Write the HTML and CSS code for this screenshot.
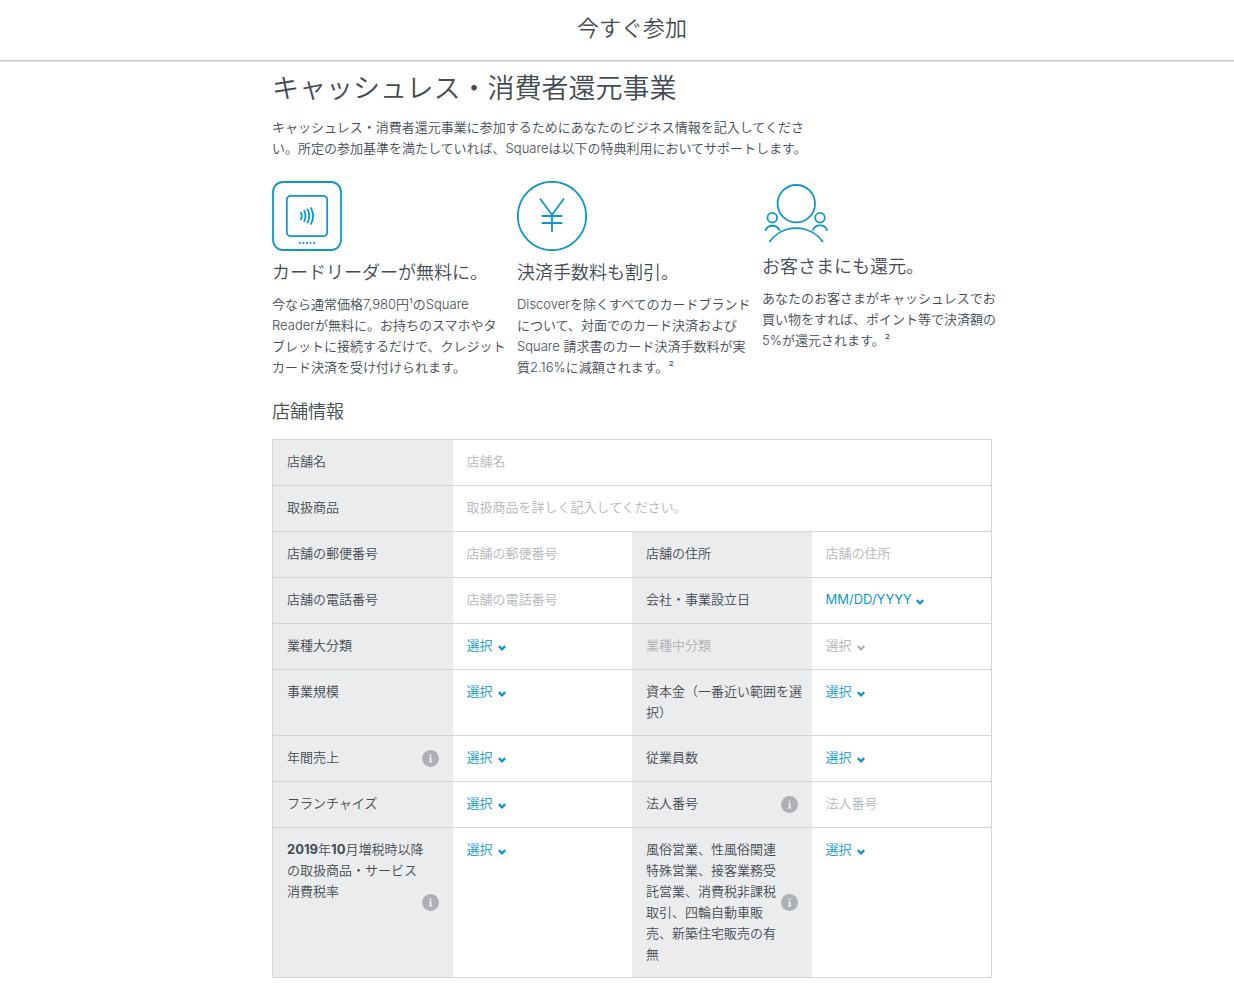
FILE: index.html
```html
<!DOCTYPE html>
<html lang="ja">
<head>
<meta charset="utf-8">
<meta name="viewport" content="width=device-width, initial-scale=1">
<title>今すぐ参加</title>
<link rel="stylesheet" href="styles.css">
</head>
<body>
<svg class="sprite" aria-hidden="true">
  <symbol id="chevron" viewBox="0 0 8 6"><path d="M.7 1.200 4 4.300 7.300 1.200" fill="none" stroke="currentColor" stroke-width="2.300"/></symbol>
  <symbol id="info" viewBox="0 0 17 17"><circle cx="8.500" cy="8.500" r="8.500" fill="#adb1b6"/><path d="M7.700 4.500h1.800v1.600H7.700zM7 7.200h2.500v4.300h.8v1H6.900v-1h.9V8.200H7z" fill="#eef0f1"/></symbol>
</svg>
<header class="topbar"><div class="topbar-title">今すぐ参加</div></header>
<main class="page">
  <h1 class="page-title">キャッシュレス・消費者還元事業</h1>
  <p class="text">キャッシュレス・消費者還元事業に参加するためにあなたのビジネス情報を記入してくださ<br>い。所定の参加基準を満たしていれば、Squareは以下の特典利用においてサポートします。</p>

  <section class="features">
    <article class="feature">
      <svg class="feature-icon" width="70" height="70" viewBox="0 0 70 70">
        <rect x="1" y="1" width="68" height="68" rx="10"/>
        <rect x="14.800" y="14.800" width="40.400" height="40.400" rx="4"/>
        <path d="M28.800 31q1.800 4 0 8M32 29.200q3 5.800 0 11.600M35.300 27.800q4 7.200 0 14.400M38.600 26.400q5 8.600 0 17.200"/>
        <path d="M27 62h1.600M30.600 62h1.600M34.200 62h1.600M37.800 62h1.600M41.400 62h1.600"/>
      </svg>
      <h3 class="subtitle">カードリーダーが無料に。</h3>
      <p class="text">今なら通常価格7,980円¹のSquare<br>Readerが無料に。お持ちのスマホやタ<br>ブレットに接続するだけで、クレジット<br>カード決済を受け付けられます。</p>
    </article>
    <article class="feature">
      <svg class="feature-icon" width="70" height="70" viewBox="0 0 70 70">
        <circle cx="35" cy="35" r="34.200"/>
        <path d="M23 17.500 35 34 47 17.500M35 34V51M24.700 35H45.300M24.700 42H45.300"/>
      </svg>
      <h3 class="subtitle">決済手数料も割引。</h3>
      <p class="text">Discoverを除くすべてのカードブランド<br>について、対面でのカード決済および<br>Square 請求書のカード決済手数料が実<br>質2.16%に減額されます。²</p>
    </article>
    <article class="feature">
      <svg class="feature-icon" width="70" height="64" viewBox="0 0 70 64">
        <circle cx="34.300" cy="22.700" r="18.700"/>
        <circle cx="10.300" cy="36.700" r="4.800"/>
        <circle cx="58" cy="36.700" r="4.800"/>
        <path d="M3.300 49.700A7.700 7.700 0 0 1 17.700 49.700M50.700 49.700A7.700 7.700 0 0 1 65.300 49.700M7.300 61A32.900 32.900 0 0 1 61 61"/>
      </svg>
      <h3 class="subtitle">お客さまにも還元。</h3>
      <p class="text">あなたのお客さまがキャッシュレスでお<br>買い物をすれば、ポイント等で決済額の<br>5%が還元されます。²</p>
    </article>
  </section>

  <h2 class="subtitle">店舗情報</h2>
  <form class="sheet">
    <div class="row">
      <label class="label" for="name">店舗名</label>
      <div class="field wide"><input class="input" id="name" type="text" placeholder="店舗名"></div>
    </div>
    <div class="row">
      <label class="label" for="goods">取扱商品</label>
      <div class="field wide"><input class="input" id="goods" type="text" placeholder="取扱商品を詳しく記入してください。"></div>
    </div>
    <div class="row">
      <label class="label" for="zip">店舗の郵便番号</label>
      <div class="field"><input class="input" id="zip" type="text" placeholder="店舗の郵便番号"></div>
      <label class="label" for="address">店舗の住所</label>
      <div class="field"><input class="input" id="address" type="text" placeholder="店舗の住所"></div>
    </div>
    <div class="row">
      <label class="label" for="phone">店舗の電話番号</label>
      <div class="field"><input class="input" id="phone" type="text" placeholder="店舗の電話番号"></div>
      <label class="label" for="founded">会社・事業設立日</label>
      <div class="field"><button class="date" id="founded" type="button">MM/DD/YYYY<svg class="chevron"><use href="#chevron"/></svg></button></div>
    </div>
    <div class="row">
      <label class="label" for="major">業種大分類</label>
      <div class="field"><span class="picker"><select class="select" id="major"><option>選択</option></select><svg class="chevron"><use href="#chevron"/></svg></span></div>
      <label class="label muted" for="minor">業種中分類</label>
      <div class="field"><span class="picker muted"><select class="select" id="minor" disabled><option>選択</option></select><svg class="chevron"><use href="#chevron"/></svg></span></div>
    </div>
    <div class="row">
      <label class="label" for="scale">事業規模</label>
      <div class="field"><span class="picker"><select class="select" id="scale"><option>選択</option></select><svg class="chevron"><use href="#chevron"/></svg></span></div>
      <label class="label" for="capital">資本金（一番近い範囲を選択）</label>
      <div class="field"><span class="picker"><select class="select" id="capital"><option>選択</option></select><svg class="chevron"><use href="#chevron"/></svg></span></div>
    </div>
    <div class="row">
      <label class="label" for="sales"><span class="label-text">年間売上</span><svg class="info"><use href="#info"/></svg></label>
      <div class="field"><span class="picker"><select class="select" id="sales"><option>選択</option></select><svg class="chevron"><use href="#chevron"/></svg></span></div>
      <label class="label" for="staff">従業員数</label>
      <div class="field"><span class="picker"><select class="select" id="staff"><option>選択</option></select><svg class="chevron"><use href="#chevron"/></svg></span></div>
    </div>
    <div class="row">
      <label class="label" for="franchise">フランチャイズ</label>
      <div class="field"><span class="picker"><select class="select" id="franchise"><option>選択</option></select><svg class="chevron"><use href="#chevron"/></svg></span></div>
      <label class="label" for="corp"><span class="label-text">法人番号</span><svg class="info"><use href="#info"/></svg></label>
      <div class="field"><input class="input" id="corp" type="text" placeholder="法人番号"></div>
    </div>
    <div class="row">
      <label class="label" for="tax"><span class="label-text nowrap"><b>2019</b>年<b>10</b>月増税時以降<br>の取扱商品・サービス<br>消費税率</span><svg class="info"><use href="#info"/></svg></label>
      <div class="field"><span class="picker"><select class="select" id="tax"><option>選択</option></select><svg class="chevron"><use href="#chevron"/></svg></span></div>
      <label class="label" for="kind"><span class="label-text">風俗営業、性風俗関連特殊営業、接客業務受託営業、消費税非課税取引、四輪自動車販売、新築住宅販売の有無</span><svg class="info"><use href="#info"/></svg></label>
      <div class="field"><span class="picker"><select class="select" id="kind"><option>選択</option></select><svg class="chevron"><use href="#chevron"/></svg></span></div>
    </div>
  </form>
</main>
</body>
</html>
```
FILE: styles.css
```css
* { box-sizing: border-box; }

body {
  margin: 0;
  padding-bottom: 19px;
  background: #fff;
  color: #434b53;
  font: 350 13px/21px Inter, "Noto Sans CJK JP", sans-serif;
}

h1, h2, h3, p { margin: 0; font-weight: inherit; }
svg { flex: none; }
.sprite { display: none; }

.topbar {
  padding: 12px 0 16px 30px;
  border-bottom: 1px solid #c6c8ca;
  box-shadow: 0 1px 1px #dddfe0;
}
.topbar-title {
  font-size: 22px;
  line-height: 32px;
  text-align: center;
}

.page {
  box-sizing: content-box;
  max-width: 720px;
  margin: 0 auto;
  padding: 8px 0 0 30px;
}

.page-title {
  margin-bottom: 8px;
  font-size: 27px;
  line-height: 40px;
}
.text { white-space: nowrap; }
.subtitle { font-size: 18px; line-height: 26px; }

.features {
  display: grid;
  grid-template-columns: repeat(3, minmax(0, 1fr));
  gap: 15px;
  margin: 22px 0 21px;
}
.feature .subtitle { margin: 9px 0 8px; }
.feature-icon {
  display: block;
  fill: none;
  stroke: #0f97cc;
  stroke-width: 1.8;
}

.sheet {
  margin-top: 14px;
  border: 1px solid #d3d6d9;
  border-bottom: 0;
}
.row {
  display: grid;
  grid-template-columns: repeat(4, minmax(0, 1fr));
  min-height: 46px;
  border-bottom: 1px solid #d3d6d9;
}
.label {
  display: flex;
  gap: 4px;
  padding: 11px 8px 12px 14px;
  background: #ebecee;
}
.label-text { flex: 1; min-width: 0; }
.label-text.nowrap { white-space: nowrap; }
.label b { font-weight: 700; }
.label.muted { color: #adb1b6; }
.info {
  align-self: center;
  width: 17px;
  height: 17px;
  margin-right: 6px;
}

.field { padding: 11px 14px 12px; }
.field.wide { grid-column: span 3; }
.input, .select, .date {
  display: block;
  height: 21px;
  margin: 0;
  padding: 0;
  border: 0;
  outline: 0;
  background: none;
  color: inherit;
  font: inherit;
}
.input { width: 100%; }
.input::placeholder { color: #b4b7bb; opacity: 1; }

.picker { display: inline-grid; align-items: center; color: #0f97cc; }
.picker.muted { color: #adb1b6; }
.select {
  grid-area: 1 / 1;
  padding-right: 12px;
  appearance: none;
}
.select:disabled { opacity: 1; color: inherit; }
.chevron { width: 8px; height: 6px; margin-top: 4px; }
.picker .chevron { grid-area: 1 / 1; justify-self: end; pointer-events: none; }
.date { display: flex; align-items: center; gap: 4px; color: #0f97cc; font-weight: 400; }
```
